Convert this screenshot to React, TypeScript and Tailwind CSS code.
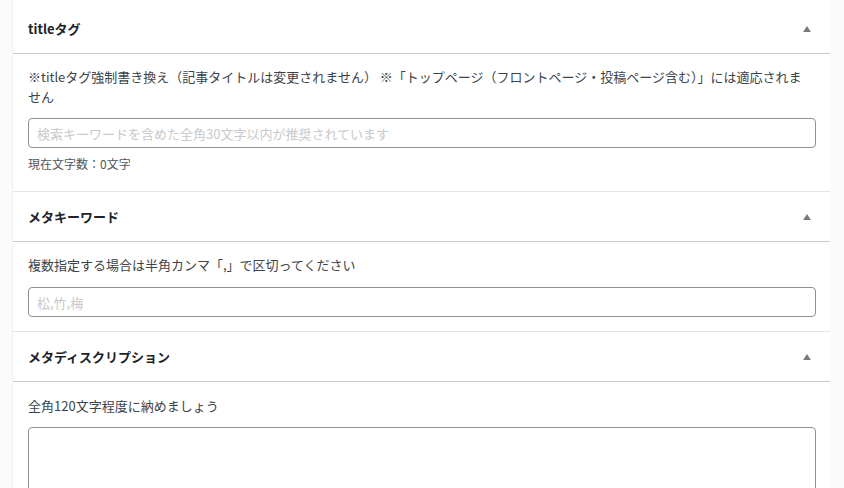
import { FC, ReactNode } from "react";

const font = { fontFamily: '"Noto Sans CJK JP", "Noto Sans", sans-serif' };

type SectionProps = {
  title: string;
  first?: boolean;
  last?: boolean;
  children: ReactNode;
};

const Toggle = () => (
  <svg width="8" height="6" viewBox="0 0 8 6" className="mr-[2px]">
    <path d="M4 0 L8 6 L0 6 Z" fill="#787c82" />
  </svg>
);

const Section: FC<SectionProps> = ({ title, first, last, children }) => {
  return (
    <section className={last ? "" : "border-b border-[#e2e4e7]"}>
      <header
        className={`flex items-center justify-between border-b border-[#c9cbcf] pl-[15px] pr-[17px] ${
          first ? "h-[54px] pt-[4px]" : "h-[50px]"
        }`}
      >
        <h2 className="text-[13px] font-bold text-[#1d2327]">{title}</h2>
        <Toggle />
      </header>
      <div className="pl-[15px] pr-[14px]">{children}</div>
    </section>
  );
};

const TextInput: FC<{ placeholder: string }> = ({ placeholder }) => (
  <input
    type="text"
    placeholder={placeholder}
    className="block h-[30px] w-full rounded-[4px] border border-[#8c8f94] bg-white px-[8px] text-[13px] text-[#2c3338] outline-none placeholder:text-[#c8c9cc]"
    style={font}
  />
);

export default function App() {
  return (
    <div className="h-[488px] w-[844px] overflow-hidden bg-[#fbfbfb]" style={font}>
      <div className="ml-[12px] h-full w-[818px] border-l border-[#f0f0f1] bg-white">
        <Section title="titleタグ" first>
          <p className="pt-[13px] text-[13px] leading-[20px] text-[#3c434a]">
            ※titleタグ強制書き換え（記事タイトルは変更されません） ※「トップページ（フロントページ・投稿ページ含む）」には適応されま
            <br />
            せん
          </p>
          <div className="mt-[11px]">
            <TextInput placeholder="検索キーワードを含めた全角30文字以内が推奨されています" />
          </div>
          <p className="mt-[7px] pb-[18px] text-[12px] leading-[18px] text-[#50575e]">
            現在文字数：0文字
          </p>
        </Section>
        <Section title="メタキーワード">
          <p className="pt-[13px] text-[13px] leading-[20px] text-[#3c434a]">
            複数指定する場合は半角カンマ「,」で区切ってください
          </p>
          <div className="mt-[12px] pb-[14px]">
            <TextInput placeholder="松,竹,梅" />
          </div>
        </Section>
        <Section title="メタディスクリプション" last>
          <p className="pt-[14px] text-[13px] leading-[20px] text-[#3c434a]">
            全角120文字程度に納めましょう
          </p>
          <textarea
            className="mt-[11px] block h-[120px] w-full resize-none rounded-[4px] border border-[#8c8f94] bg-white px-[8px] text-[13px] outline-none"
            style={font}
          />
        </Section>
      </div>
    </div>
  );
}
